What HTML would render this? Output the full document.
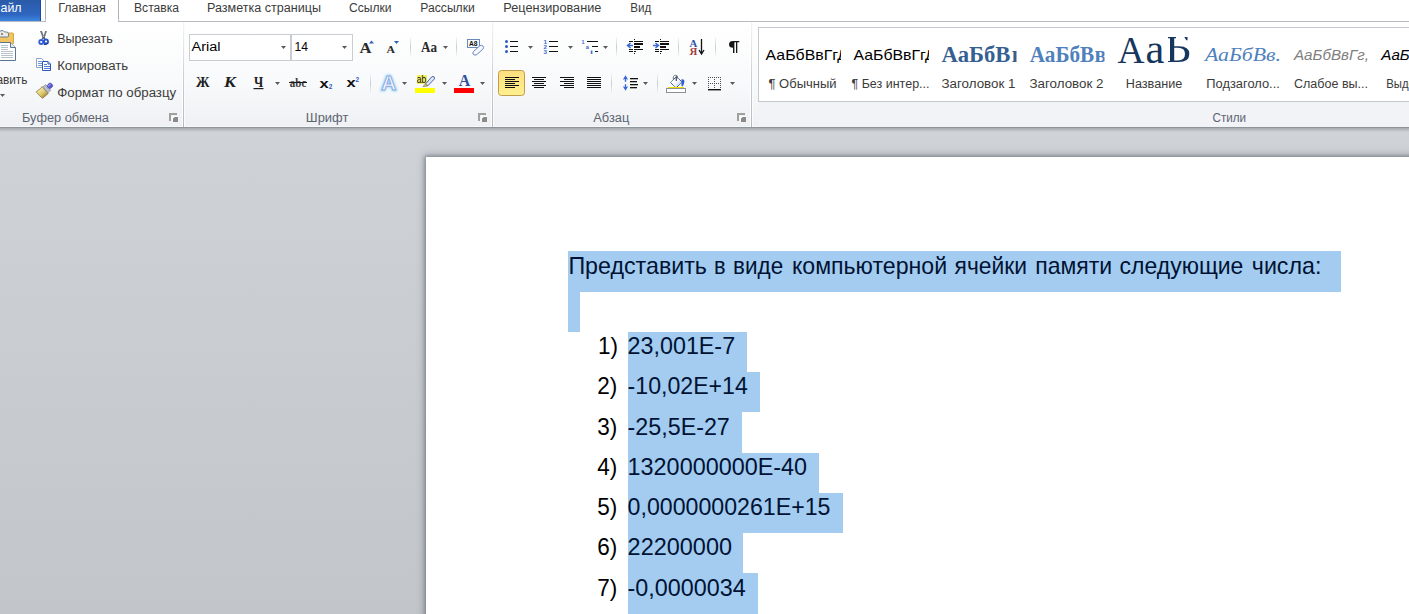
<!DOCTYPE html>
<html><head><meta charset="utf-8">
<style>
*{margin:0;padding:0}
html,body{width:1409px;height:614px;overflow:hidden;background:#cdd0d5}
svg{display:block}
text{white-space:pre}
</style></head><body>
<svg width="1409" height="614" viewBox="0 0 1409 614" font-family="Liberation Sans">

<defs>
<linearGradient id="gFile" x1="0" y1="0" x2="0" y2="1"><stop offset="0" stop-color="#2a5aa8"/><stop offset=".7" stop-color="#2f66c0"/><stop offset="1" stop-color="#3c86e0"/></linearGradient>
<linearGradient id="gRib" x1="0" y1="0" x2="0" y2="1"><stop offset="0" stop-color="#ffffff"/><stop offset=".55" stop-color="#f9fafb"/><stop offset="1" stop-color="#eef0f3"/></linearGradient>
<linearGradient id="gAct" x1="0" y1="0" x2="0" y2="1"><stop offset="0" stop-color="#fddf7f"/><stop offset="1" stop-color="#fff08e"/></linearGradient>
<linearGradient id="gShadow" x1="0" y1="0" x2="0" y2="1"><stop offset="0" stop-color="#a6aab0"/><stop offset="1" stop-color="#cfd2d7"/></linearGradient>
<linearGradient id="gSep" x1="0" y1="0" x2="0" y2="1"><stop offset="0" stop-color="#f4f5f7"/><stop offset=".5" stop-color="#cdd1d6"/><stop offset="1" stop-color="#b5b9bf"/></linearGradient>
<linearGradient id="gWs" x1="0" y1="0" x2="0" y2="1"><stop offset="0" stop-color="#cfd2d7"/><stop offset="1" stop-color="#c2c5ca"/></linearGradient>
<linearGradient id="gSep2" x1="0" y1="0" x2="0" y2="1"><stop offset="0" stop-color="#f6f7f9"/><stop offset=".5" stop-color="#c9cdd3"/><stop offset="1" stop-color="#f6f7f9"/></linearGradient>
<filter id="glow" x="-50%" y="-50%" width="200%" height="200%"><feGaussianBlur stdDeviation="1"/></filter>
<filter id="blur2" x="-20%" y="-20%" width="140%" height="140%"><feGaussianBlur stdDeviation="1.5"/></filter>
<filter id="blur1" x="-20%" y="-20%" width="140%" height="140%"><feGaussianBlur stdDeviation="4"/></filter>
</defs>
<rect x="0" y="128" width="1409" height="486" fill="url(#gWs)" />
<rect x="0" y="128" width="1409" height="4" fill="url(#gShadow)" />
<rect x="425" y="156" width="1000" height="500" fill="#5d6570" opacity=".6" filter="url(#blur1)"/><rect x="424.5" y="155.5" width="1000" height="500" fill="#50565e" opacity=".32" filter="url(#blur2)"/>
<rect x="426" y="157" width="1000" height="500" fill="#fff" />
<rect x="0" y="0" width="1409" height="21" fill="#fff" />
<rect x="0" y="0" width="41" height="21" fill="url(#gFile)" />
<rect x="40" y="0" width="1" height="21" fill="#1d4aa6" />
<text x="0.5" y="12" font-size="13" fill="#fff" textLength="21" lengthAdjust="spacingAndGlyphs" >айл</text>
<rect x="0" y="21" width="1409" height="107" fill="url(#gRib)" />
<rect x="0" y="21" width="1409" height="1" fill="#b9bcc1" />
<rect x="0" y="126" width="1409" height="1" fill="#f7f8fa" />
<rect x="0" y="127" width="1409" height="1" fill="#8f949b" />
<rect x="46" y="0" width="72" height="22" fill="#fff" />
<path d="M44.5 21.5 Q45.5 21 45.5 19.5 V0 M118.5 0 V19.5 Q118.5 21 119.5 21.5" stroke="#aeb3ba" fill="none"/>
<rect x="46" y="21" width="72" height="1" fill="#fff" />
<text x="58.2" y="12" font-size="12" fill="#3b3b3b" textLength="47.5" lengthAdjust="spacingAndGlyphs" >Главная</text>
<text x="134" y="12" font-size="12" fill="#3b3b3b" textLength="45" lengthAdjust="spacingAndGlyphs" >Вставка</text>
<text x="207" y="12" font-size="12" fill="#3b3b3b" textLength="114" lengthAdjust="spacingAndGlyphs" >Разметка страницы</text>
<text x="349" y="12" font-size="12" fill="#3b3b3b" textLength="42.5" lengthAdjust="spacingAndGlyphs" >Ссылки</text>
<text x="420.3" y="12" font-size="12" fill="#3b3b3b" textLength="54.5" lengthAdjust="spacingAndGlyphs" >Рассылки</text>
<text x="503.3" y="12" font-size="12" fill="#3b3b3b" textLength="98" lengthAdjust="spacingAndGlyphs" >Рецензирование</text>
<text x="630.2" y="12" font-size="12" fill="#3b3b3b" textLength="21" lengthAdjust="spacingAndGlyphs" >Вид</text>
<rect x="182" y="22" width="1" height="105" fill="#ffffff" />
<rect x="183" y="22" width="1" height="105" fill="url(#gSep)" />
<rect x="184" y="22" width="1" height="105" fill="#fbfbfc" />
<rect x="491" y="22" width="1" height="105" fill="#ffffff" />
<rect x="492" y="22" width="1" height="105" fill="url(#gSep)" />
<rect x="493" y="22" width="1" height="105" fill="#fbfbfc" />
<rect x="750" y="22" width="1" height="105" fill="#ffffff" />
<rect x="751" y="22" width="1" height="105" fill="url(#gSep)" />
<rect x="752" y="22" width="1" height="105" fill="#fbfbfc" />
<rect x="169" y="113" width="8" height="2" fill="#a0a0a0" />
<rect x="169" y="113" width="2" height="8" fill="#a0a0a0" />
<rect x="172" y="116" width="6" height="6" fill="#fbfbfb" />
<rect x="173" y="117" width="5" height="5" fill="#8a8a8a" />
<path d="M173 117h1.6l-1.6 1.6z" fill="#fff"/>
<rect x="478" y="113" width="8" height="2" fill="#a0a0a0" />
<rect x="478" y="113" width="2" height="8" fill="#a0a0a0" />
<rect x="481" y="116" width="6" height="6" fill="#fbfbfb" />
<rect x="482" y="117" width="5" height="5" fill="#8a8a8a" />
<path d="M482 117h1.6l-1.6 1.6z" fill="#fff"/>
<rect x="737" y="113" width="8" height="2" fill="#a0a0a0" />
<rect x="737" y="113" width="2" height="8" fill="#a0a0a0" />
<rect x="740" y="116" width="6" height="6" fill="#fbfbfb" />
<rect x="741" y="117" width="5" height="5" fill="#8a8a8a" />
<path d="M741 117h1.6l-1.6 1.6z" fill="#fff"/>
<rect x="-2" y="33" width="15.5" height="11" rx="1" fill="#f2c461" stroke="#d6a646" stroke-width="1"/>
<path d="M-2 37 H7.5 Q8.5 37 8.5 36 V34 Q8.5 32 6.5 32 H4.5 Q3.5 30.5 2 30.5 Q0 30.5 -0.5 32 H-2z" fill="#e9ecef" stroke="#6f7f91" stroke-width="1"/><circle cx="2" cy="34" r="1" fill="#8a6a3a"/>
<path d="M-2 42.5 H10.5 L15.5 47.5 V60.5 H-2z" fill="#fff" stroke="#5e7591" stroke-width="1"/><path d="M10.5 42.5 V47.5 H15.5" fill="#e2e8f0" stroke="#5e7591" stroke-width="1"/>
<rect x="1" y="45.0" width="7" height="1" fill="#b9c1ca" />
<rect x="1" y="47.0" width="7" height="1" fill="#b9c1ca" />
<rect x="1" y="49.0" width="7" height="1" fill="#b9c1ca" />
<rect x="1" y="51.0" width="12" height="1" fill="#b9c1ca" />
<rect x="1" y="53.0" width="12" height="1" fill="#b9c1ca" />
<rect x="1" y="55.0" width="12" height="1" fill="#b9c1ca" />
<rect x="1" y="57.0" width="12" height="1" fill="#b9c1ca" />
<text x="-3.6" y="83.5" font-size="12" fill="#3b3b3b" textLength="31" lengthAdjust="spacingAndGlyphs" >авить</text>
<path d="M0 94h5l-2.5 3z" fill="#5a5a5a"/>
<path d="M40 31 L42 31 L44.2 37.5 L42.8 38.5z M47 31 L45.2 31 L43 37.5 L44.4 38.5z" fill="#6f7680"/>
<path d="M43.6 37.2 L42.2 39.2 M43.6 37.2 L45 39.2" stroke="#4a5a80" stroke-width="1.4"/>
<circle cx="41.2" cy="42" r="2.9" fill="#2f5fd8"/><circle cx="46" cy="41.5" r="2.9" fill="#2a55c8"/><circle cx="41.2" cy="42" r="1.1" fill="#fff"/><circle cx="46" cy="41.5" r="1.1" fill="#fff"/>
<path d="M43.8 44.5 Q46 45 48.5 43" stroke="#17307a" stroke-width="1" fill="none"/>
<text x="57.2" y="43" font-size="12" fill="#3b3b3b" textLength="55.5" lengthAdjust="spacingAndGlyphs" >Вырезать</text>
<path d="M36.5 58.5 H41.5 L43.5 60.5 V67.5 H36.5z" fill="#fff" stroke="#8fa3c6" stroke-width="1"/>
<rect x="38" y="61.0" width="4" height="1" fill="#6a98dc" />
<rect x="38" y="63.0" width="4" height="1" fill="#6a98dc" />
<rect x="38" y="65.0" width="4" height="1" fill="#6a98dc" />
<path d="M42.5 61.5 H48 L50.5 64 V70.5 H42.5z" fill="#fff" stroke="#2f56b3" stroke-width="1"/><path d="M48 61.5V64H50.5" fill="#cfdcf3" stroke="#2f56b3" stroke-width="1"/>
<rect x="44" y="64.0" width="3" height="1" fill="#4a7bd2" />
<rect x="44" y="66.0" width="6" height="1" fill="#4a7bd2" />
<rect x="44" y="68.0" width="6" height="1" fill="#4a7bd2" />
<text x="57.2" y="69.5" font-size="12" fill="#3b3b3b" textLength="71" lengthAdjust="spacingAndGlyphs" >Копировать</text>
<linearGradient id="gBr" x1="0" y1="0" x2="0" y2="1"><stop offset="0" stop-color="#f6e9a8"/><stop offset=".6" stop-color="#dcc56a"/><stop offset="1" stop-color="#a88e3a"/></linearGradient>
<g transform="translate(39.2 95.2) rotate(-41)"><path d="M0 -4.6 Q1.5 -3.5 3 -4.6 Q4.5 -3.5 8 -4.6 V4.6 H0.5 Q-0.5 0 0 -4.6z" fill="url(#gBr)" stroke="#8f7a35" stroke-width=".7"/><rect x="8" y="-3.8" width="3.8" height="7.6" fill="#c9ced8" stroke="#6f7786" stroke-width=".6"/><path d="M8.8 -3.5 V3.5 M10.6 -3.5 V3.5" stroke="#8a92a0" stroke-width=".6"/><rect x="11.8" y="-2.3" width="5" height="4.6" rx="1.8" fill="#5b5bd6" stroke="#3a3aa0" stroke-width=".6"/><rect x="12.5" y="-1.6" width="3.6" height="1.2" fill="#9090ee"/></g>
<text x="57.2" y="96.5" font-size="12" fill="#3b3b3b" textLength="119" lengthAdjust="spacingAndGlyphs" >Формат по образцу</text>
<rect x="189.5" y="34.5" width="101" height="26" fill="#fff" stroke="#c9cdd2"/>
<rect x="291.5" y="34.5" width="61" height="26" fill="#fff" stroke="#c9cdd2"/>
<text x="191.6" y="51" font-size="12.5" fill="#000" textLength="29" lengthAdjust="spacingAndGlyphs" >Arial</text>
<path d="M281 46h5l-2.5 3z" fill="#5a5a5a"/>
<text x="294.5" y="51" font-size="12.5" fill="#000" textLength="13.5" lengthAdjust="spacingAndGlyphs" >14</text>
<path d="M342 46h5l-2.5 3z" fill="#5a5a5a"/>
<text x="359.5" y="53" font-size="15" fill="#2a2a2a" textLength="12" lengthAdjust="spacingAndGlyphs" font-family="Liberation Serif" font-weight="bold">A</text>
<path d="M369 43.5 L371.5 40.5 L374 43.5z" fill="#2e5fc0"/>
<text x="386.5" y="53" font-size="10.5" fill="#2a2a2a" textLength="8.5" lengthAdjust="spacingAndGlyphs" font-family="Liberation Serif" font-weight="bold">A</text>
<path d="M394 41 L399 41 L396.5 44z" fill="#2e5fc0"/>
<rect x="410" y="37" width="1" height="20" fill="url(#gSep2)" />
<text x="421" y="52" font-size="14" fill="#2a2a2a" textLength="16" lengthAdjust="spacingAndGlyphs" font-family="Liberation Serif" font-weight="bold">Aa</text>
<path d="M443 46h5l-2.5 3z" fill="#5a5a5a"/>
<rect x="456" y="37" width="1" height="20" fill="url(#gSep2)" />
<rect x="467.5" y="39.5" width="12" height="8" fill="#f6f8fc" stroke="#6a88b8"/>
<text x="469" y="46.3" font-size="7.5" fill="#111" textLength="8.5" lengthAdjust="spacingAndGlyphs" font-weight="bold">A8</text>
<path d="M473.5 51.5 L479.5 46 Q481.5 44.5 483 46 Q484.3 47.6 482.8 49.2 L476.8 54.6 Q474.8 55.8 473.3 54.4 Q472.3 53 473.5 51.5z" fill="#f8f8ff" stroke="#6a84c4" stroke-width="1"/>
<text x="196" y="87.2" font-size="14.5" fill="#1e1e1e" textLength="13.5" lengthAdjust="spacingAndGlyphs" font-family="Liberation Serif" font-weight="bold">Ж</text>
<text x="224" y="87.2" font-size="14.5" fill="#1e1e1e" textLength="12" lengthAdjust="spacingAndGlyphs" font-family="Liberation Serif" font-weight="bold" font-style="italic">К</text>
<text x="254" y="87.2" font-size="14.5" fill="#1e1e1e" textLength="9.2" lengthAdjust="spacingAndGlyphs" font-family="Liberation Serif" font-weight="bold">Ч</text>
<rect x="253.5" y="88" width="10" height="1.2" fill="#1e1e1e" />
<path d="M275 82h5l-2.5 3z" fill="#5a5a5a"/>
<text x="289.8" y="87" font-size="12" fill="#3a3a3a" textLength="16.5" lengthAdjust="spacingAndGlyphs" font-family="Liberation Serif" font-weight="bold">abc</text>
<rect x="289" y="82" width="18" height="1" fill="#1a1a1a" />
<text x="319.6" y="88.2" font-size="13.5" fill="#111" textLength="9.2" lengthAdjust="spacingAndGlyphs" font-weight="bold">x</text>
<text x="328.8" y="89" font-size="6.5" fill="#2e5fc0" textLength="3.6" lengthAdjust="spacingAndGlyphs" font-weight="bold">2</text>
<text x="346.4" y="87" font-size="13.5" fill="#111" textLength="9.2" lengthAdjust="spacingAndGlyphs" font-weight="bold">x</text>
<text x="355.4" y="82" font-size="6.5" fill="#2e5fc0" textLength="3.6" lengthAdjust="spacingAndGlyphs" font-weight="bold">2</text>
<rect x="370" y="73" width="1" height="21" fill="url(#gSep2)" />
<text x="381.3" y="90" font-size="20" font-weight="bold" fill="#7fd4f4" stroke="#7fd4f4" stroke-width="2.6" opacity=".8" filter="url(#glow)" textLength="15" lengthAdjust="spacingAndGlyphs">A</text>
<text x="381.3" y="90" font-size="20" font-weight="bold" fill="#f7f7ff" stroke="#90a8e0" stroke-width=".9" textLength="15" lengthAdjust="spacingAndGlyphs">A</text>
<path d="M402 82h5l-2.5 3z" fill="#5a5a5a"/>
<rect x="417" y="75" width="10" height="9" fill="#f0f060" />
<text x="416.8" y="82.6" font-size="10.5" fill="#111" textLength="9.5" lengthAdjust="spacingAndGlyphs" >ab</text>
<path d="M425.5 84 L431.5 77 Q433 75.8 434.2 77 Q435 78.2 434 79.4 L427.5 86 z" fill="#dfe6f4" stroke="#4a64a8" stroke-width="1"/>
<path d="M425.5 84 L423 86.5 L427.5 86z" fill="#f4e080" stroke="#7a6030" stroke-width=".7"/>
<rect x="415" y="88" width="20" height="5" fill="#ffff00" />
<path d="M442 82h5l-2.5 3z" fill="#5a5a5a"/>
<text x="458.8" y="86.2" font-size="16.5" fill="#2c4f9e" textLength="11.5" lengthAdjust="spacingAndGlyphs" font-family="Liberation Serif" font-weight="bold">A</text>
<rect x="454" y="88" width="20" height="5" fill="#ff0000" />
<path d="M480 82h5l-2.5 3z" fill="#5a5a5a"/>
<circle cx="506.5" cy="41.5" r="1.5" fill="#2f58c0"/>
<rect x="510" y="41" width="8" height="1" fill="#111" />
<circle cx="506.5" cy="46.5" r="1.5" fill="#2f58c0"/>
<rect x="510" y="46" width="8" height="1" fill="#111" />
<circle cx="506.5" cy="51.5" r="1.5" fill="#2f58c0"/>
<rect x="510" y="51" width="8" height="1" fill="#111" />
<path d="M528 46h5l-2.5 3z" fill="#5a5a5a"/>
<text x="543.5" y="44" font-size="6" fill="#3d6ac9" textLength="3.5" lengthAdjust="spacingAndGlyphs" font-weight="bold">1</text>
<rect x="549" y="41" width="9" height="1" fill="#111" />
<text x="543.5" y="49" font-size="6" fill="#3d6ac9" textLength="3.5" lengthAdjust="spacingAndGlyphs" font-weight="bold">2</text>
<rect x="549" y="46" width="9" height="1" fill="#111" />
<text x="543.5" y="54" font-size="6" fill="#3d6ac9" textLength="3.5" lengthAdjust="spacingAndGlyphs" font-weight="bold">3</text>
<rect x="549" y="51" width="9" height="1" fill="#111" />
<path d="M568 46h5l-2.5 3z" fill="#5a5a5a"/>
<text x="581.5" y="44" font-size="6" fill="#3d6ac9" textLength="3" lengthAdjust="spacingAndGlyphs" font-weight="bold">1</text>
<rect x="587" y="41" width="11" height="1" fill="#111" />
<text x="585.8" y="49" font-size="6" fill="#3d6ac9" textLength="3.2" lengthAdjust="spacingAndGlyphs" font-weight="bold">a</text>
<rect x="592" y="46" width="6" height="1" fill="#111" />
<text x="590" y="54" font-size="6" fill="#3d6ac9" textLength="3" lengthAdjust="spacingAndGlyphs" font-weight="bold">i</text>
<rect x="595" y="51" width="3" height="1" fill="#111" />
<path d="M603 46h5l-2.5 3z" fill="#5a5a5a"/>
<rect x="616" y="37" width="1" height="20" fill="url(#gSep2)" />
<rect x="634" y="39" width="1" height="1" fill="#111" />
<rect x="634" y="53" width="1" height="1" fill="#111" />
<rect x="629" y="41" width="4" height="1" fill="#111" />
<rect x="634" y="41" width="9" height="1" fill="#111" />
<rect x="634" y="43" width="9" height="2" fill="#111" />
<rect x="634" y="46" width="6" height="2" fill="#111" />
<rect x="629" y="49" width="4" height="1" fill="#111" />
<rect x="634" y="49" width="9" height="1" fill="#111" />
<rect x="629" y="51" width="4" height="1" fill="#111" />
<rect x="634" y="51" width="2" height="1" fill="#111" />
<path d="M627.5 45.5 H633 M630.5 43 L627.5 45.5 L630.5 48" stroke="#3a6ad8" stroke-width="1.5" fill="none"/>
<rect x="660" y="39" width="1" height="1" fill="#111" />
<rect x="660" y="53" width="1" height="1" fill="#111" />
<rect x="655" y="41" width="4" height="1" fill="#111" />
<rect x="660" y="41" width="9" height="1" fill="#111" />
<rect x="660" y="43" width="9" height="2" fill="#111" />
<rect x="660" y="46" width="6" height="2" fill="#111" />
<rect x="655" y="49" width="4" height="1" fill="#111" />
<rect x="660" y="49" width="9" height="1" fill="#111" />
<rect x="655" y="51" width="4" height="1" fill="#111" />
<rect x="660" y="51" width="2" height="1" fill="#111" />
<path d="M653 45.5 H658 M655.5 43 L658.5 45.5 L655.5 48" stroke="#3a6ad8" stroke-width="1.5" fill="none"/>
<rect x="678" y="37" width="1" height="20" fill="url(#gSep2)" />
<text x="689.6" y="46.8" font-size="10.8" fill="#2f52a6" textLength="7.8" lengthAdjust="spacingAndGlyphs" font-family="Liberation Serif" font-weight="bold">A</text>
<text x="689.6" y="55" font-size="10.5" fill="#a23c3c" textLength="7.8" lengthAdjust="spacingAndGlyphs" font-family="Liberation Serif" font-weight="bold">Я</text>
<path d="M701.5 39 V53.5 M699 50 L701.5 54 L704 50" stroke="#111" stroke-width="1.3" fill="none"/>
<rect x="715" y="37" width="1" height="20" fill="url(#gSep2)" />
<path d="M733 41 H739.3 V42.3 H737.3 V53 H736 V42.3 H734.4 V53 H733 V47.8 Q729 47.6 729 44.4 Q729 41 733 41z" fill="#161616"/>
<rect x="498.5" y="70.5" width="26" height="25" rx="3" fill="url(#gAct)" stroke="#c39b4b"/>
<rect x="505" y="77" width="14" height="1" fill="#111" />
<rect x="505" y="79" width="10" height="1" fill="#111" />
<rect x="505" y="81" width="14" height="1" fill="#111" />
<rect x="505" y="83" width="10" height="1" fill="#111" />
<rect x="505" y="85" width="14" height="1" fill="#111" />
<rect x="505" y="87" width="10" height="1" fill="#111" />
<rect x="532.0" y="77" width="14" height="1" fill="#111" />
<rect x="534.0" y="79" width="10" height="1" fill="#111" />
<rect x="532.0" y="81" width="14" height="1" fill="#111" />
<rect x="534.0" y="83" width="10" height="1" fill="#111" />
<rect x="532.0" y="85" width="14" height="1" fill="#111" />
<rect x="534.0" y="87" width="10" height="1" fill="#111" />
<rect x="560" y="77" width="14" height="1" fill="#111" />
<rect x="564" y="79" width="10" height="1" fill="#111" />
<rect x="560" y="81" width="14" height="1" fill="#111" />
<rect x="564" y="83" width="10" height="1" fill="#111" />
<rect x="560" y="85" width="14" height="1" fill="#111" />
<rect x="564" y="87" width="10" height="1" fill="#111" />
<rect x="587" y="77" width="14" height="1" fill="#111" />
<rect x="587" y="79" width="14" height="1" fill="#111" />
<rect x="587" y="81" width="14" height="1" fill="#111" />
<rect x="587" y="83" width="14" height="1" fill="#111" />
<rect x="587" y="85" width="14" height="1" fill="#111" />
<rect x="587" y="87" width="14" height="1" fill="#111" />
<rect x="611" y="73" width="1" height="21" fill="url(#gSep2)" />
<path d="M622.8 79.8 L625.5 75.2 L628.2 79.8 L626.2 79 V81.8 H624.8 V79z M622.8 86.2 L625.5 90.8 L628.2 86.2 L626.2 87 V84.2 H624.8 V87z" fill="#3565d6"/>
<rect x="630" y="78" width="8" height="1.3" fill="#111" />
<rect x="630" y="81" width="7" height="1.3" fill="#111" />
<rect x="630" y="84" width="8" height="1.3" fill="#111" />
<rect x="630" y="87" width="7" height="1.3" fill="#111" />
<path d="M643 82h5l-2.5 3z" fill="#5a5a5a"/>
<rect x="657" y="73" width="1" height="21" fill="url(#gSep2)" />
<linearGradient id="gBk" x1="0" y1="0" x2="1" y2="1"><stop offset=".45" stop-color="#ffffff"/><stop offset="1" stop-color="#9db8ec"/></linearGradient>
<path d="M670.5 82.5 L676.5 76.5 L682 82 L676 88z" fill="url(#gBk)" stroke="#233b7c" stroke-width="1" stroke-dasharray="1.2 .5"/>
<path d="M673.5 80 Q672.5 75.5 675.5 75.2 Q678.2 75.2 677.5 78.5" stroke="#5c6678" stroke-width=".9" fill="none"/>
<rect x="675.6" y="76.5" width="1.4" height="4.5" fill="#4f5869" />
<path d="M681.5 79.2 Q685 78.8 684.3 82.5 Q683.6 85.5 682.2 86.8 Q680.8 84.5 681.6 82.5z" fill="#2f5fd0"/>
<rect x="668" y="87" width="16" height="1.3" fill="#f0e000" />
<rect x="666.5" y="88.5" width="19" height="4" fill="#fff" stroke="#8f8f8f"/>
<path d="M692 82h5l-2.5 3z" fill="#5a5a5a"/>
<rect x="708" y="77" width="1" height="1" fill="#4a4f58" />
<rect x="710" y="77" width="1" height="1" fill="#4a4f58" />
<rect x="712" y="77" width="1" height="1" fill="#4a4f58" />
<rect x="714" y="77" width="1" height="1" fill="#4a4f58" />
<rect x="716" y="77" width="1" height="1" fill="#4a4f58" />
<rect x="718" y="77" width="1" height="1" fill="#4a4f58" />
<rect x="720" y="77" width="1" height="1" fill="#4a4f58" />
<rect x="708" y="79" width="1" height="1" fill="#4a4f58" />
<rect x="714" y="79" width="1" height="1" fill="#4a4f58" />
<rect x="720" y="79" width="1" height="1" fill="#4a4f58" />
<rect x="708" y="81" width="1" height="1" fill="#4a4f58" />
<rect x="714" y="81" width="1" height="1" fill="#4a4f58" />
<rect x="720" y="81" width="1" height="1" fill="#4a4f58" />
<rect x="708" y="83" width="1" height="1" fill="#4a4f58" />
<rect x="710" y="83" width="1" height="1" fill="#4a4f58" />
<rect x="712" y="83" width="1" height="1" fill="#4a4f58" />
<rect x="714" y="83" width="1" height="1" fill="#4a4f58" />
<rect x="716" y="83" width="1" height="1" fill="#4a4f58" />
<rect x="718" y="83" width="1" height="1" fill="#4a4f58" />
<rect x="720" y="83" width="1" height="1" fill="#4a4f58" />
<rect x="708" y="85" width="1" height="1" fill="#4a4f58" />
<rect x="714" y="85" width="1" height="1" fill="#4a4f58" />
<rect x="720" y="85" width="1" height="1" fill="#4a4f58" />
<rect x="708" y="87" width="1" height="1" fill="#4a4f58" />
<rect x="714" y="87" width="1" height="1" fill="#4a4f58" />
<rect x="720" y="87" width="1" height="1" fill="#4a4f58" />
<rect x="708" y="89" width="13" height="1.4" fill="#111" />
<path d="M730 82h5l-2.5 3z" fill="#5a5a5a"/>
<rect x="758.5" y="27.5" width="700" height="74" fill="#fff" stroke="#c6cad0"/>
<rect x="759" y="102" width="650" height="25" fill="#f2f3f6" />
<svg x="760" y="40" width="81" height="30"><text x="5.6" y="19.8" font-size="15" fill="#000" textLength="72.5" lengthAdjust="spacingAndGlyphs">АаБбВвГг</text><text x="77.2" y="19.8" font-size="15" fill="#000">Д</text></svg>
<svg x="848" y="40" width="81" height="30"><text x="5.4" y="19.8" font-size="15" fill="#000" textLength="72.5" lengthAdjust="spacingAndGlyphs">АаБбВвГг</text><text x="77" y="19.8" font-size="15" fill="#000">Д</text></svg>
<text x="768.5" y="88" font-size="12" fill="#3b3b3b" textLength="68" lengthAdjust="spacingAndGlyphs" >¶ Обычный</text>
<text x="851.5" y="88" font-size="12" fill="#3b3b3b" textLength="78" lengthAdjust="spacingAndGlyphs" >¶ Без интер...</text>
<svg x="938" y="30" width="78.5" height="40"><text x="3.6" y="31.8" font-size="22.4" font-family="Liberation Serif" font-weight="bold" fill="#365f91" textLength="68.8" lengthAdjust="spacingAndGlyphs">АаБбВ</text><text x="73.6" y="31.8" font-size="22.4" font-family="Liberation Serif" font-weight="bold" fill="#365f91" textLength="14" lengthAdjust="spacingAndGlyphs">в</text></svg>
<svg x="1026" y="30" width="78.5" height="40"><text x="3.8" y="31.8" font-size="22.4" font-family="Liberation Serif" font-weight="bold" fill="#4f81bd" textLength="64.5" lengthAdjust="spacingAndGlyphs">АаБбВ</text><text x="68.6" y="31.8" font-size="22.4" font-family="Liberation Serif" font-weight="bold" fill="#4f81bd" textLength="12" lengthAdjust="spacingAndGlyphs">в</text></svg>
<text x="941.5" y="88" font-size="12" fill="#3b3b3b" textLength="74" lengthAdjust="spacingAndGlyphs" >Заголовок 1</text>
<text x="1029.5" y="88" font-size="12" fill="#3b3b3b" textLength="74" lengthAdjust="spacingAndGlyphs" >Заголовок 2</text>
<text x="1117.4" y="62.7" font-size="38.5" fill="#17365d" textLength="27" lengthAdjust="spacingAndGlyphs" font-family="Liberation Serif">А</text>
<text x="1145.6" y="62.7" font-size="42.5" fill="#17365d" textLength="18.8" lengthAdjust="spacingAndGlyphs" font-family="Liberation Serif">а</text>
<path d="M1168 37 H1176 V38.2 H1174.2 V46.2 H1179 Q1189.3 46.2 1189.3 53.9 Q1189.3 62 1178.5 62 H1168 V61 H1170 V38.2 H1168z M1174.2 47.8 V60.4 H1178 Q1185 60.4 1185 54 Q1185 47.8 1178 47.8z M1184.3 37 H1187.5 V40.2 H1186.3z" fill="#17365d" fill-rule="evenodd"/>
<text x="1125.8" y="88" font-size="12" fill="#3b3b3b" textLength="56.5" lengthAdjust="spacingAndGlyphs" >Название</text>
<svg x="1200" y="30" width="81" height="40"><text x="5" y="30.8" font-size="18" font-family="Liberation Serif" font-style="italic" fill="#4f81bd" textLength="76" lengthAdjust="spacingAndGlyphs">АаБбВв.</text></svg>
<text x="1206.3" y="88" font-size="12" fill="#3b3b3b" textLength="73.5" lengthAdjust="spacingAndGlyphs" >Подзаголо...</text>
<svg x="1290" y="30" width="79" height="40"><text x="4" y="30.2" font-size="14" font-style="italic" fill="#808080" textLength="75" lengthAdjust="spacingAndGlyphs">АаБбВвГг,</text></svg>
<text x="1294" y="88" font-size="12" fill="#3b3b3b" textLength="74" lengthAdjust="spacingAndGlyphs" >Слабое вы...</text>
<text x="1381.3" y="60.2" font-size="14" fill="#000" textLength="75" lengthAdjust="spacingAndGlyphs" font-style="italic">АаБбВвГг,</text>
<text x="1386.3" y="88" font-size="12" fill="#3b3b3b" textLength="60" lengthAdjust="spacingAndGlyphs" >Выделение</text>
<text x="22" y="122" font-size="12" fill="#5d6472" textLength="87" lengthAdjust="spacingAndGlyphs" >Буфер обмена</text>
<text x="305.8" y="122" font-size="12" fill="#5d6472" textLength="42.5" lengthAdjust="spacingAndGlyphs" >Шрифт</text>
<text x="593.3" y="122" font-size="12" fill="#5d6472" textLength="36" lengthAdjust="spacingAndGlyphs" >Абзац</text>
<text x="1212.5" y="122" font-size="12" fill="#5d6472" textLength="33.5" lengthAdjust="spacingAndGlyphs" >Стили</text>
<rect x="568" y="251" width="773" height="41" fill="#a3ccf0" />
<rect x="568" y="292" width="12" height="40" fill="#a3ccf0" />
<rect x="628" y="332" width="119" height="40" fill="#a3ccf0" />
<rect x="628" y="372" width="132" height="40" fill="#a3ccf0" />
<rect x="628" y="412" width="114" height="41" fill="#a3ccf0" />
<rect x="628" y="453" width="191" height="40" fill="#a3ccf0" />
<rect x="628" y="493" width="215" height="40" fill="#a3ccf0" />
<rect x="628" y="533" width="115" height="40" fill="#a3ccf0" />
<rect x="628" y="573" width="130" height="41" fill="#a3ccf0" />
<text x="568.4" y="274" font-size="24" fill="#001233" textLength="138.6" lengthAdjust="spacingAndGlyphs" >Представить</text>
<text x="713.9" y="274" font-size="24" fill="#001233" textLength="11.6" lengthAdjust="spacingAndGlyphs" >в</text>
<text x="733.0999999999999" y="274" font-size="24" fill="#001233" textLength="50.1" lengthAdjust="spacingAndGlyphs" >виде</text>
<text x="791.9" y="274" font-size="24" fill="#001233" textLength="155.2" lengthAdjust="spacingAndGlyphs" >компьютерной</text>
<text x="954.5999999999999" y="274" font-size="24" fill="#001233" textLength="72.4" lengthAdjust="spacingAndGlyphs" >ячейки</text>
<text x="1035.3" y="274" font-size="24" fill="#001233" textLength="76.9" lengthAdjust="spacingAndGlyphs" >памяти</text>
<text x="1119.6" y="274" font-size="24" fill="#001233" textLength="123.8" lengthAdjust="spacingAndGlyphs" >следующие</text>
<text x="1251.8" y="274" font-size="24" fill="#001233" textLength="69.6" lengthAdjust="spacingAndGlyphs" >числа:</text>
<text x="598.0" y="354" font-size="24" fill="#000" textLength="20" lengthAdjust="spacingAndGlyphs" >1)</text>
<text x="627.6" y="354" font-size="24" fill="#001233" textLength="107.5" lengthAdjust="spacingAndGlyphs" >23,001E-7</text>
<text x="597.3" y="394" font-size="24" fill="#000" textLength="20" lengthAdjust="spacingAndGlyphs" >2)</text>
<text x="627.6" y="394" font-size="24" fill="#001233" textLength="120.2" lengthAdjust="spacingAndGlyphs" >-10,02E+14</text>
<text x="597.3" y="435" font-size="24" fill="#000" textLength="20" lengthAdjust="spacingAndGlyphs" >3)</text>
<text x="627.6" y="435" font-size="24" fill="#001233" textLength="102.2" lengthAdjust="spacingAndGlyphs" >-25,5E-27</text>
<text x="597.3" y="475" font-size="24" fill="#000" textLength="20" lengthAdjust="spacingAndGlyphs" >4)</text>
<text x="627.6" y="475" font-size="24" fill="#001233" textLength="179.5" lengthAdjust="spacingAndGlyphs" >1320000000E-40</text>
<text x="597.3" y="515" font-size="24" fill="#000" textLength="20" lengthAdjust="spacingAndGlyphs" >5)</text>
<text x="627.6" y="515" font-size="24" fill="#001233" textLength="202.9" lengthAdjust="spacingAndGlyphs" >0,0000000261E+15</text>
<text x="597.3" y="555" font-size="24" fill="#000" textLength="20" lengthAdjust="spacingAndGlyphs" >6)</text>
<text x="627.6" y="555" font-size="24" fill="#001233" textLength="104.4" lengthAdjust="spacingAndGlyphs" >22200000</text>
<text x="597.3" y="596" font-size="24" fill="#000" textLength="20" lengthAdjust="spacingAndGlyphs" >7)</text>
<text x="627.6" y="596" font-size="24" fill="#001233" textLength="118.1" lengthAdjust="spacingAndGlyphs" >-0,0000034</text>
</svg>
</body></html>
